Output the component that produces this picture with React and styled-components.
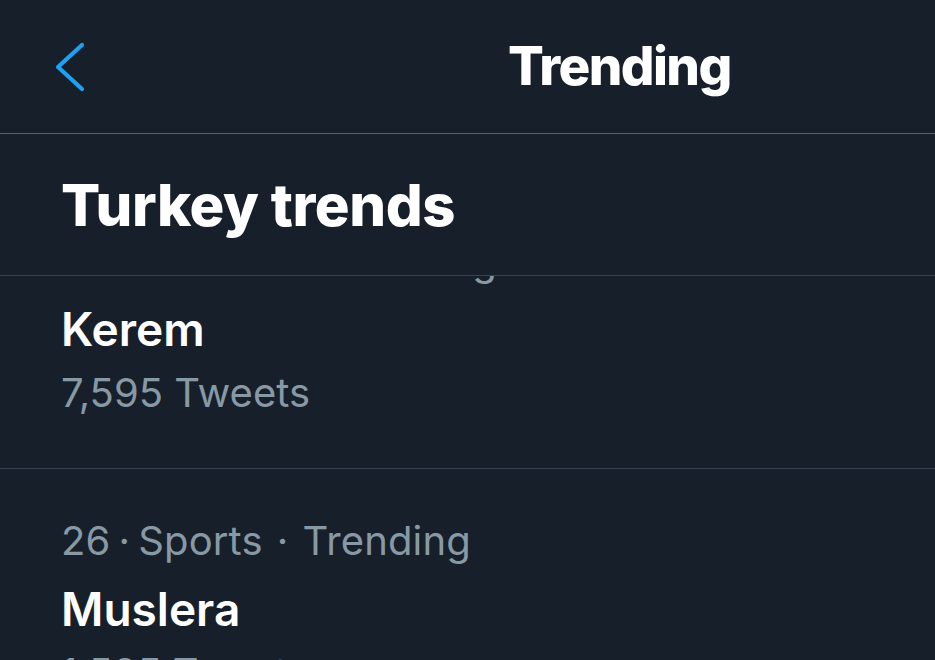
import React from "react";
import styled, { createGlobalStyle } from "styled-components";

const Global = createGlobalStyle`
  html, body { margin: 0; padding: 0; background: #17202a; }
  body { font-family: Inter, "Noto Sans", "Liberation Sans", sans-serif; -webkit-font-smoothing: antialiased; }
`;

const Screen = styled.div`
  width: 935px;
  height: 660px;
  overflow: hidden;
  background: #17202a;
  display: flex;
  flex-direction: column;
`;

const NavBar = styled.header`
  height: 133px;
  flex: none;
  display: flex;
  align-items: center;
  padding-left: 55px;
  border-bottom: 1px solid #56626d;
  box-sizing: content-box;
`;

const BackButton = styled.button`
  background: none;
  border: 0;
  padding: 0;
  width: 30px;
  height: 50px;
  display: flex;
  align-items: center;
  justify-content: center;
  cursor: pointer;
`;

const NavTitle = styled.h1`
  margin: 0 0 0 423px;
  font-size: 53px;
  font-weight: 800;
  letter-spacing: -1.6px;
  color: #ffffff;
  line-height: 1;
`;

const SectionHeader = styled.div`
  height: 141px;
  flex: none;
  display: flex;
  align-items: center;
  padding-left: 61px;
  border-bottom: 1px solid #37434e;
`;

const SectionTitle = styled.h2`
  margin: 0;
  font-size: 58px;
  font-weight: 800;
  letter-spacing: -0.4px;
  color: #ffffff;
  line-height: 1;
`;

const ListViewport = styled.div`
  flex: 1;
  overflow: hidden;
`;

const List = styled.ul`
  list-style: none;
  margin: ${(p) => -p.$scroll}px 0 0;
  padding: 0;
`;

const Row = styled.li`
  padding: 48px 0 51px 61px;
  border-bottom: 1px solid #37434e;
  display: flex;
  flex-direction: column;
`;

const Meta = styled.div`
  font-size: 40px;
  line-height: 48px;
  letter-spacing: 0.15px;
  color: #8899a6;
  white-space: nowrap;
`;

const Dot = styled.span`
  margin: 0 ${(p) => p.$space}px;
`;

const Name = styled.div`
  margin-top: 16px;
  font-size: 46px;
  line-height: 56px;
  font-weight: 600;
  color: #ffffff;
`;

const Count = styled.div`
  margin-top: 12px;
  font-size: 40px;
  line-height: 48px;
  color: #8899a6;
`;

const trends = [
  { rank: 25, category: "Football", label: "Trending", name: "Kerem", count: "7,595" },
  { rank: 26, category: "Sports", label: "Trending", name: "Muslera", count: "1,585" },
];

function ChevronLeft() {
  return (
    <svg width="30" height="50" viewBox="0 0 30 50" fill="none">
      <path
        d="M27 3 L3 25 L27 47"
        stroke="#1da1f2"
        strokeWidth="4.2"
        strokeLinecap="round"
        strokeLinejoin="round"
      />
    </svg>
  );
}

export default function App() {
  return (
    <>
      <Global />
      <Screen>
        <NavBar>
          <BackButton aria-label="Back">
            <ChevronLeft />
          </BackButton>
          <NavTitle>Trending</NavTitle>
        </NavBar>
        <SectionHeader>
          <SectionTitle>Turkey trends</SectionTitle>
        </SectionHeader>
        <ListViewport>
          <List $scroll={87}>
            {trends.map((t) => (
              <Row key={t.name}>
                <Meta>
                  {t.rank}
                  <Dot $space={8}>·</Dot>
                  {t.category}
                  <Dot $space={14}>·</Dot>
                  {t.label}
                </Meta>
                <Name>{t.name}</Name>
                <Count>{t.count} Tweets</Count>
              </Row>
            ))}
          </List>
        </ListViewport>
      </Screen>
    </>
  );
}
